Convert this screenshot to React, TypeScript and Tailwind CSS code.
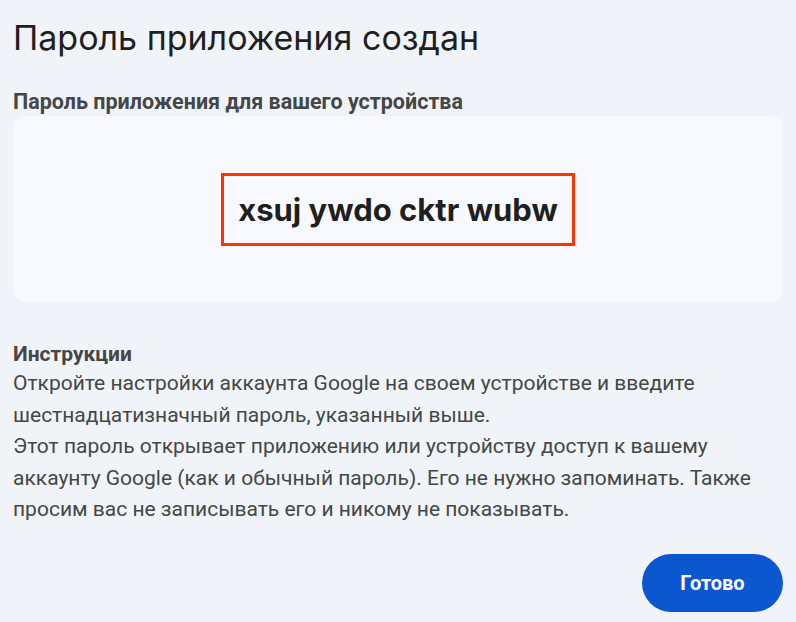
export default function App() {
  return (
    <div className="min-h-[622px] w-[796px] bg-[#f0f4f9] px-[13px] pt-[16px] font-['Roboto',sans-serif] text-[#444746]">
      <h1 className="font-['Inter',sans-serif] text-[34px] font-normal leading-[44px] text-[#1f1f1f]">
        Пароль приложения создан
      </h1>

      <h2 className="mt-[29px] text-[21.5px] font-bold leading-[26px]">
        Пароль приложения для вашего устройства
      </h2>

      <div className="mt-px flex h-[186px] items-center justify-center rounded-[12px] bg-[#f8f9fe]">
        <div className="border-[3px] border-[#ff3300] px-[14px] py-[14px]">
          <span className="block font-['Inter',sans-serif] text-[31px] font-bold leading-[39px] text-[#1f1f1f]">
            xsuj ywdo cktr wubw
          </span>
        </div>
      </div>

      <h3 className="mt-[39px] text-[21px] font-bold leading-[26px]">Инструкции</h3>
      <div className="mt-px text-[21px] leading-[31.5px]">
        <p>
          Откройте настройки аккаунта Google на своем устройстве и введите
          <br />
          шестнадцатизначный пароль, указанный выше.
        </p>
        <p>
          Этот пароль открывает приложению или устройству доступ к вашему
          <br />
          аккаунту Google (как и обычный пароль). Его не нужно запоминать. Также
          <br />
          просим вас не записывать его и никому не показывать.
        </p>
      </div>

      <div className="mt-[28px] flex justify-end">
        <button className="h-[58px] w-[141px] rounded-full bg-[#0b57d0] text-[20px] font-bold text-white">
          Готово
        </button>
      </div>
    </div>
  );
}
